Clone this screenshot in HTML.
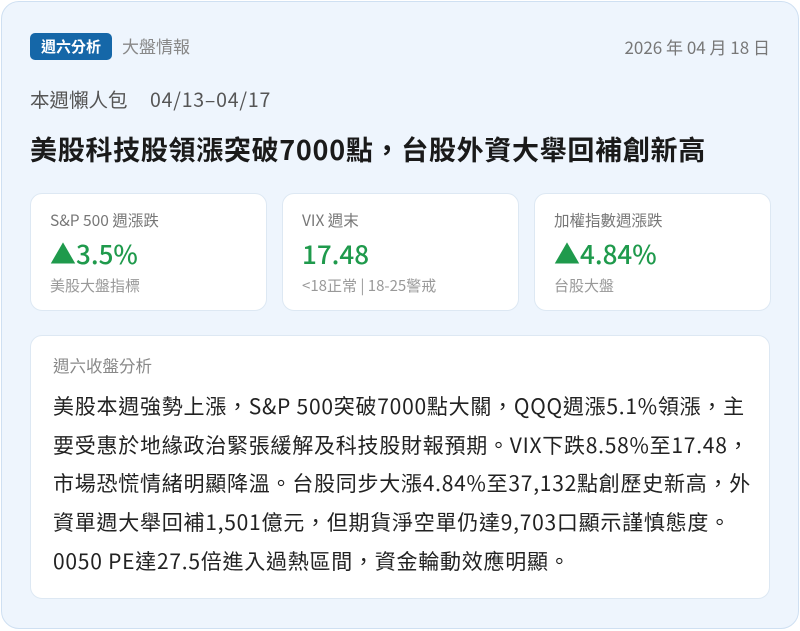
<!DOCTYPE html>
<html><head><meta charset="utf-8"><style>
*{margin:0;padding:0;box-sizing:border-box}
body{width:800px;height:631px;background:#fff;font-family:"Noto Sans CJK TC",sans-serif;overflow:hidden}
.outer{position:absolute;left:1px;top:1px;width:798px;height:628px;background:#eef5fd;border:1px solid #cfe0f2;border-radius:18px}
.badge{position:absolute;left:30px;top:33px;width:82px;height:27px;background:#1567a8;color:#fff;border-radius:5px;font-size:15px;font-weight:bold;text-align:center;line-height:27px}
.cat{position:absolute;left:122px;top:34px;font-size:17px;line-height:24px;color:#888}
.date{position:absolute;right:30px;top:35px;font-size:17px;line-height:24px;color:#777}
.sub{position:absolute;left:30px;top:86px;font-size:19.5px;line-height:26px;color:#555;white-space:pre}
.sub span{position:absolute;left:120px;letter-spacing:0.8px}
.title{position:absolute;left:30px;top:130px;font-size:27px;line-height:38px;font-weight:bold;color:#1a1a1a;white-space:nowrap;letter-spacing:0.7px}
.card{position:absolute;top:193px;width:237px;height:118px;background:#fff;border:1px solid #dde8f3;border-radius:12px;padding:15px 0 0 19px}
.card .l{font-size:15.5px;color:#777;line-height:22px}
.card .v{font-size:26px;color:#1f9a4c;margin-top:7px;height:32px;line-height:32px;font-weight:500}
.card .s{font-size:15px;color:#999;margin-top:5px;line-height:22px}
.big{position:absolute;left:30px;top:335px;width:740px;height:264px;background:#fff;border:1px solid #dde8f3;border-radius:12px;padding:18px 0 0 22px}
.big .l{font-size:16.5px;color:#888;line-height:22px}
.big p{font-size:21px;color:#222;line-height:38.7px;margin-top:11px;white-space:nowrap;letter-spacing:0.75px}
</style></head><body>
<div class="outer"></div>
<div class="badge">週六分析</div>
<div class="cat">大盤情報</div>
<div class="date">2026 年 04 月 18 日</div>
<div class="sub">本週懶人包<span>04/13–04/17</span></div>
<div class="title">美股科技股領漲突破7000點，台股外資大舉回補創新高</div>
<div class="card" style="left:30px"><div class="l">S&amp;P 500 週漲跌</div><div class="v">▲3.5%</div><div class="s">美股大盤指標</div></div>
<div class="card" style="left:282px"><div class="l">VIX 週末</div><div class="v">17.48</div><div class="s">&lt;18正常 | 18-25警戒</div></div>
<div class="card" style="left:534px"><div class="l">加權指數週漲跌</div><div class="v">▲4.84%</div><div class="s">台股大盤</div></div>
<div class="big"><div class="l">週六收盤分析</div>
<p>美股本週強勢上漲，S&amp;P 500突破7000點大關，QQQ週漲5.1%領漲，主<br>要受惠於地緣政治緊張緩解及科技股財報預期。VIX下跌8.58%至17.48，<br>市場恐慌情緒明顯降溫。台股同步大漲4.84%至37,132點創歷史新高，外<br>資單週大舉回補1,501億元，但期貨淨空單仍達9,703口顯示謹慎態度。<br>0050 PE達27.5倍進入過熱區間，資金輪動效應明顯。</p></div>
</body></html>
